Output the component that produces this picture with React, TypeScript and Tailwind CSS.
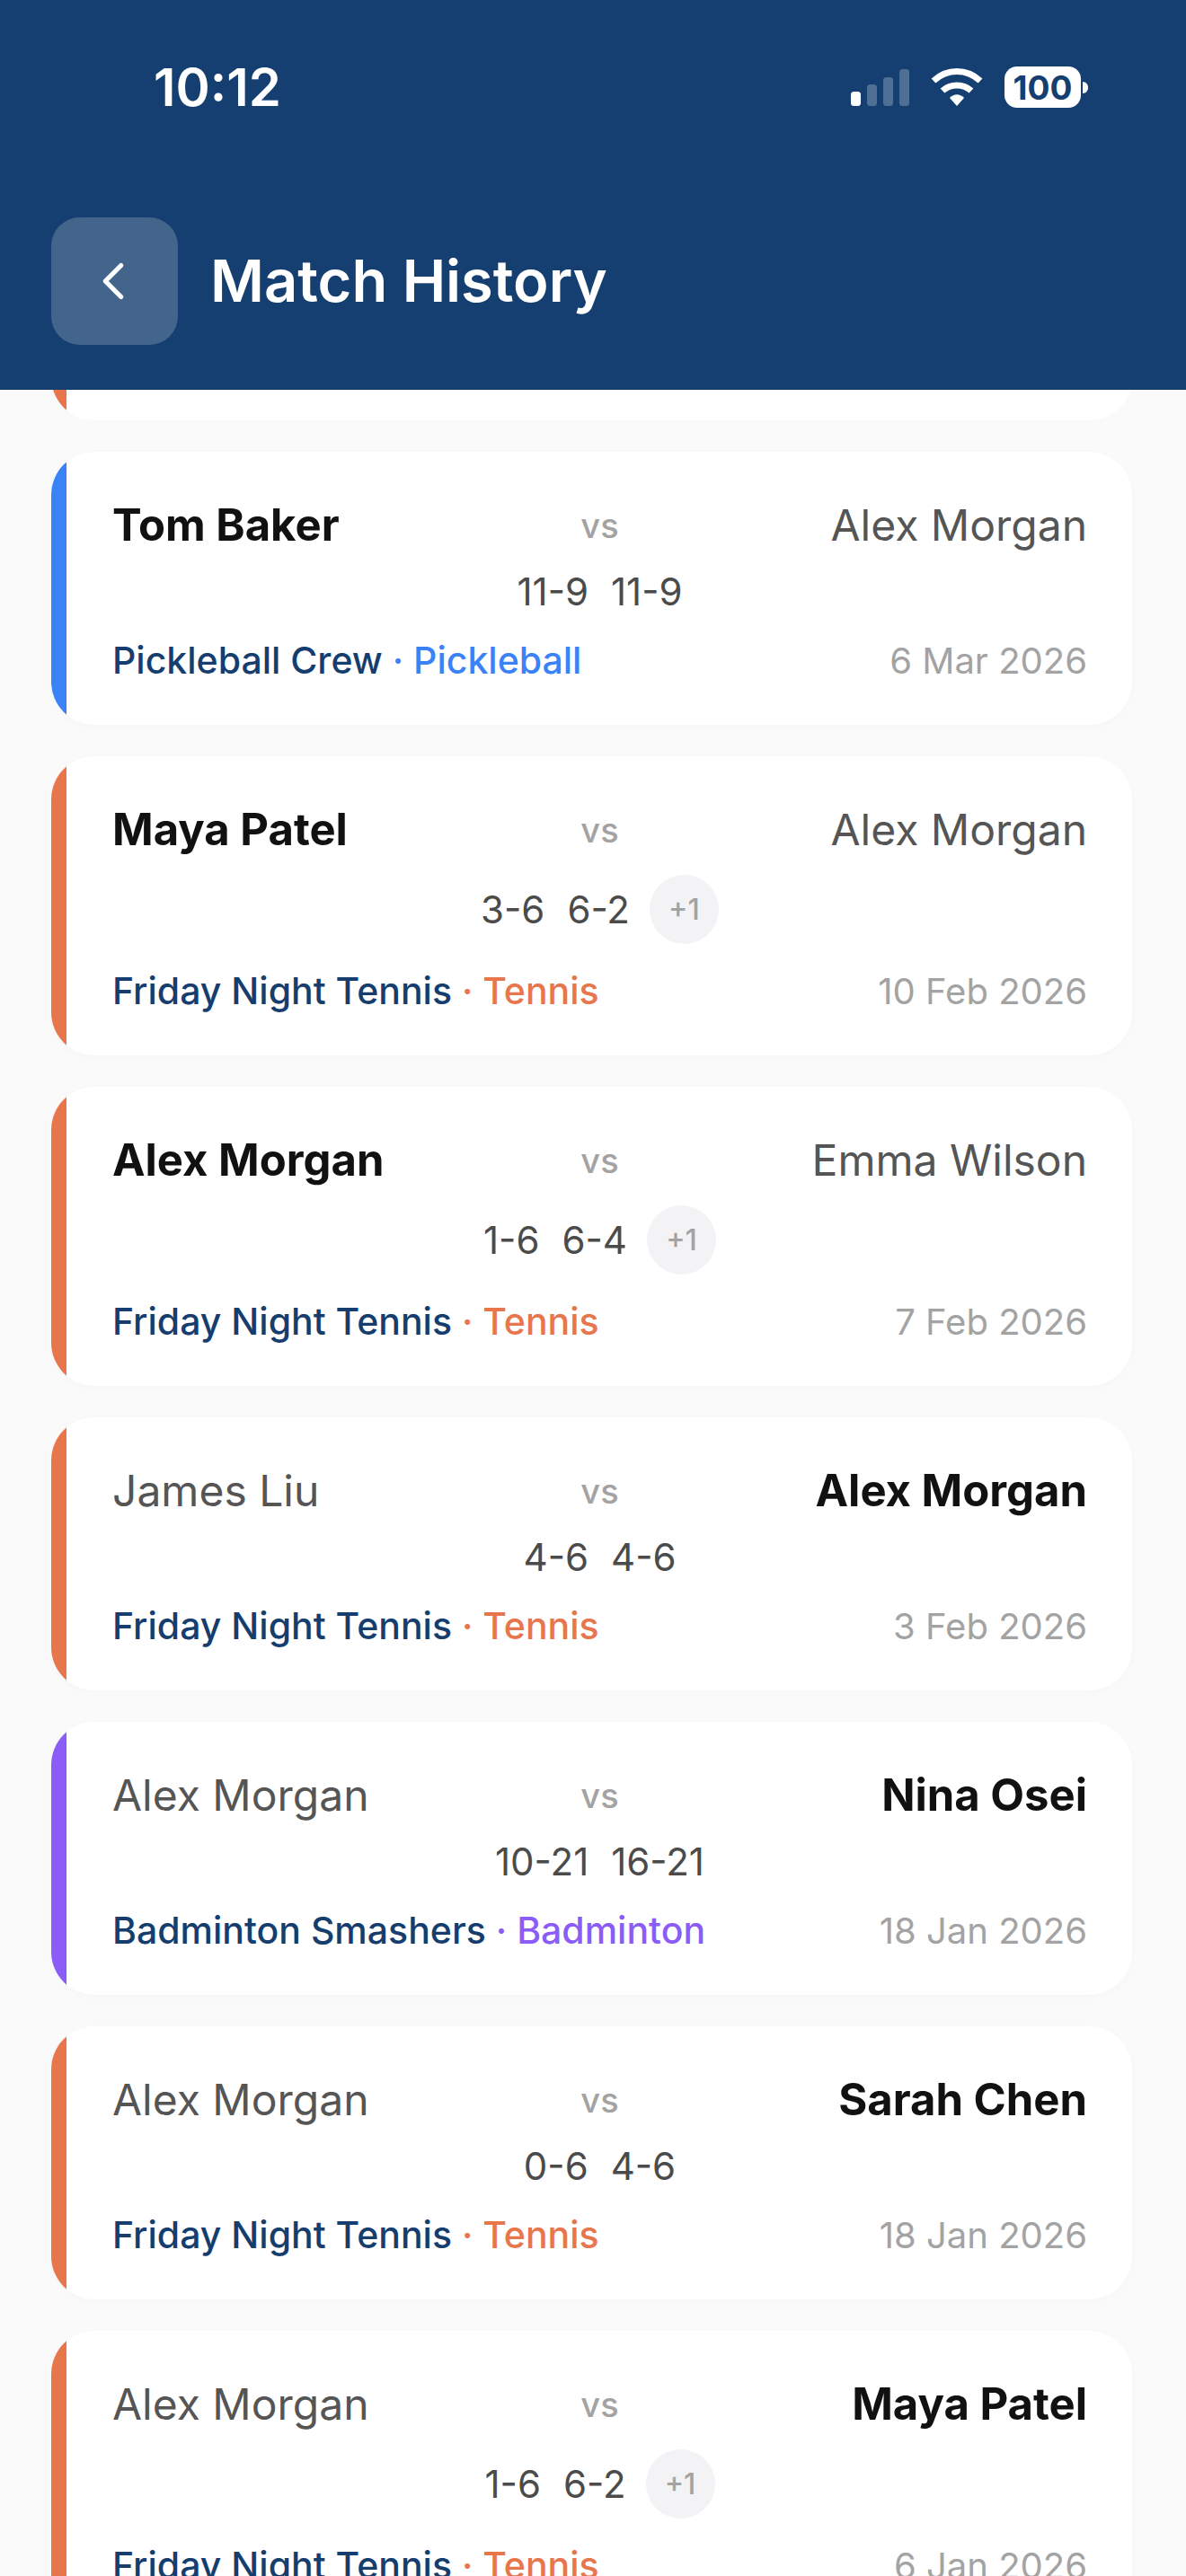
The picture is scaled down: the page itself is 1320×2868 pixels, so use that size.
import { ChevronLeft } from 'lucide-react';

type Sport = 'Tennis' | 'Pickleball' | 'Badminton';

interface Match {
  left: string;
  right: string;
  winner: 'left' | 'right';
  scores: string[];
  extra?: string;
  club: string;
  sport: Sport;
  date: string;
}

const matches: Match[] = [
  { left: 'Tom Baker', right: 'Alex Morgan', winner: 'left', scores: ['11-9', '11-9'], club: 'Pickleball Crew', sport: 'Pickleball', date: '6 Mar 2026' },
  { left: 'Maya Patel', right: 'Alex Morgan', winner: 'left', scores: ['3-6', '6-2'], extra: '+1', club: 'Friday Night Tennis', sport: 'Tennis', date: '10 Feb 2026' },
  { left: 'Alex Morgan', right: 'Emma Wilson', winner: 'left', scores: ['1-6', '6-4'], extra: '+1', club: 'Friday Night Tennis', sport: 'Tennis', date: '7 Feb 2026' },
  { left: 'James Liu', right: 'Alex Morgan', winner: 'right', scores: ['4-6', '4-6'], club: 'Friday Night Tennis', sport: 'Tennis', date: '3 Feb 2026' },
  { left: 'Alex Morgan', right: 'Nina Osei', winner: 'right', scores: ['10-21', '16-21'], club: 'Badminton Smashers', sport: 'Badminton', date: '18 Jan 2026' },
  { left: 'Alex Morgan', right: 'Sarah Chen', winner: 'right', scores: ['0-6', '4-6'], club: 'Friday Night Tennis', sport: 'Tennis', date: '18 Jan 2026' },
  { left: 'Alex Morgan', right: 'Maya Patel', winner: 'right', scores: ['1-6', '6-2'], extra: '+1', club: 'Friday Night Tennis', sport: 'Tennis', date: '6 Jan 2026' },
];

const barColor: Record<Sport, string> = {
  Tennis: 'bg-[#e8764c]',
  Pickleball: 'bg-[#3b82f6]',
  Badminton: 'bg-[#8b5cf6]',
};

const sportColor: Record<Sport, string> = {
  Tennis: 'text-[#e8764c]',
  Pickleball: 'text-[#3b82f6]',
  Badminton: 'text-[#8b5cf6]',
};

function SignalIcon() {
  return (
    <svg width="65" height="41" viewBox="0 0 65 41" fill="#fff">
      <rect x="0" y="25" width="11" height="16" rx="3.5" />
      <rect x="18" y="17" width="11" height="24" rx="3.5" opacity="0.25" />
      <rect x="36" y="9" width="11" height="32" rx="3.5" opacity="0.25" />
      <rect x="54" y="0" width="11" height="41" rx="3.5" opacity="0.25" />
    </svg>
  );
}

function WifiIcon() {
  return (
    <svg width="58" height="42" viewBox="0 0 58 42" fill="none" stroke="#fff" strokeWidth="7">
      <path d="M3 14 C18 0 40 0 55 14" />
      <path d="M13 25 C22 17 36 17 45 25" />
      <path d="M21 33 L29 42 L37 33 C32 28 26 28 21 33 Z" fill="#fff" stroke="none" />
    </svg>
  );
}

function Battery() {
  return (
    <div className="flex items-center gap-[2px]">
      <div className="flex h-[46px] w-[85px] items-center justify-center rounded-[14px] bg-white text-[37px] font-bold leading-none text-[#143f70]">
        100
      </div>
      <div className="h-[13px] w-[6px] rounded-r-full bg-white" />
    </div>
  );
}

function MatchCard({ match }: { match: Match }) {
  const leftWon = match.winner === 'left';
  return (
    <div className="flex shrink-0 overflow-hidden rounded-[48px] bg-white shadow-[0_2px_8px_rgba(0,0,0,0.02)]">
      <div className={`w-[17px] shrink-0 ${barColor[match.sport]}`} />
      <div className="min-w-0 flex-1 pb-[48px] pl-[51px] pr-[50px] pt-[48px]">
        <div className="flex h-[68px] items-center">
          <div className={`flex-1 ${leftWon ? 'text-[49px] font-bold text-[#111111]' : 'text-[48px] text-[#555555]'}`}>{match.left}</div>
          <div className="text-[38px] font-medium text-[#a3a3a3]">vs</div>
          <div className={`flex-1 text-right ${leftWon ? 'text-[48px] text-[#555555]' : 'text-[49px] font-bold text-[#111111]'}`}>{match.right}</div>
        </div>
        <div className="mt-[16px] flex items-center justify-center gap-[25px] text-[42px] leading-[48px] text-[#4b4b4b]">
          {match.scores.map((s, i) => (
            <span key={i}>{s}</span>
          ))}
          {match.extra && (
            <span className="-ml-[3px] flex h-[77px] w-[77px] items-center justify-center rounded-full bg-[#f3f3f6] text-[32px] font-medium text-[#a3a3a3]">
              {match.extra}
            </span>
          )}
        </div>
        <div className="mt-[30px] flex h-[46px] items-center justify-between">
          <div className="text-[41px] font-medium text-[#153e6f]">
            {match.club}
            <span className={sportColor[match.sport]}> · {match.sport}</span>
          </div>
          <div className="text-[40px] text-[#a3a3a3]">{match.date}</div>
        </div>
      </div>
    </div>
  );
}

export default function App() {
  return (
    <div className="flex h-[2868px] flex-col overflow-hidden bg-[#fafafa] font-['Inter',sans-serif]">
      {/* Header */}
      <div className="h-[434px] shrink-0 bg-[#143f70]">
        <div className="flex items-center justify-between pl-[171px] pr-[109px] pt-[65px]">
          <span className="text-[58px] font-semibold leading-[64px] text-white">10:12</span>
          <div className="flex items-center gap-[24px]">
            <SignalIcon />
            <WifiIcon />
            <Battery />
          </div>
        </div>
        <div className="mt-[113px] flex items-center gap-[36px] pl-[57px]">
          <button className="flex h-[142px] w-[141px] items-center justify-center rounded-[32px] bg-white/20 pr-[4px] text-white">
            <ChevronLeft size={70} strokeWidth={1.8} />
          </button>
          <h1 className="text-[65px] font-semibold text-white">Match History</h1>
        </div>
      </div>

      {/* List, scrolled so only the tail of the first card shows */}
      <div className="flex min-h-0 flex-1 flex-col gap-[35px] overflow-hidden pl-[57px] pr-[60px]">
        <div className="-mt-[266px] flex h-[300px] shrink-0 overflow-hidden rounded-[48px] bg-white">
          <div className="w-[17px] bg-[#e8764c]" />
        </div>
        {matches.map((m, i) => (
          <MatchCard key={i} match={m} />
        ))}
      </div>
    </div>
  );
}
